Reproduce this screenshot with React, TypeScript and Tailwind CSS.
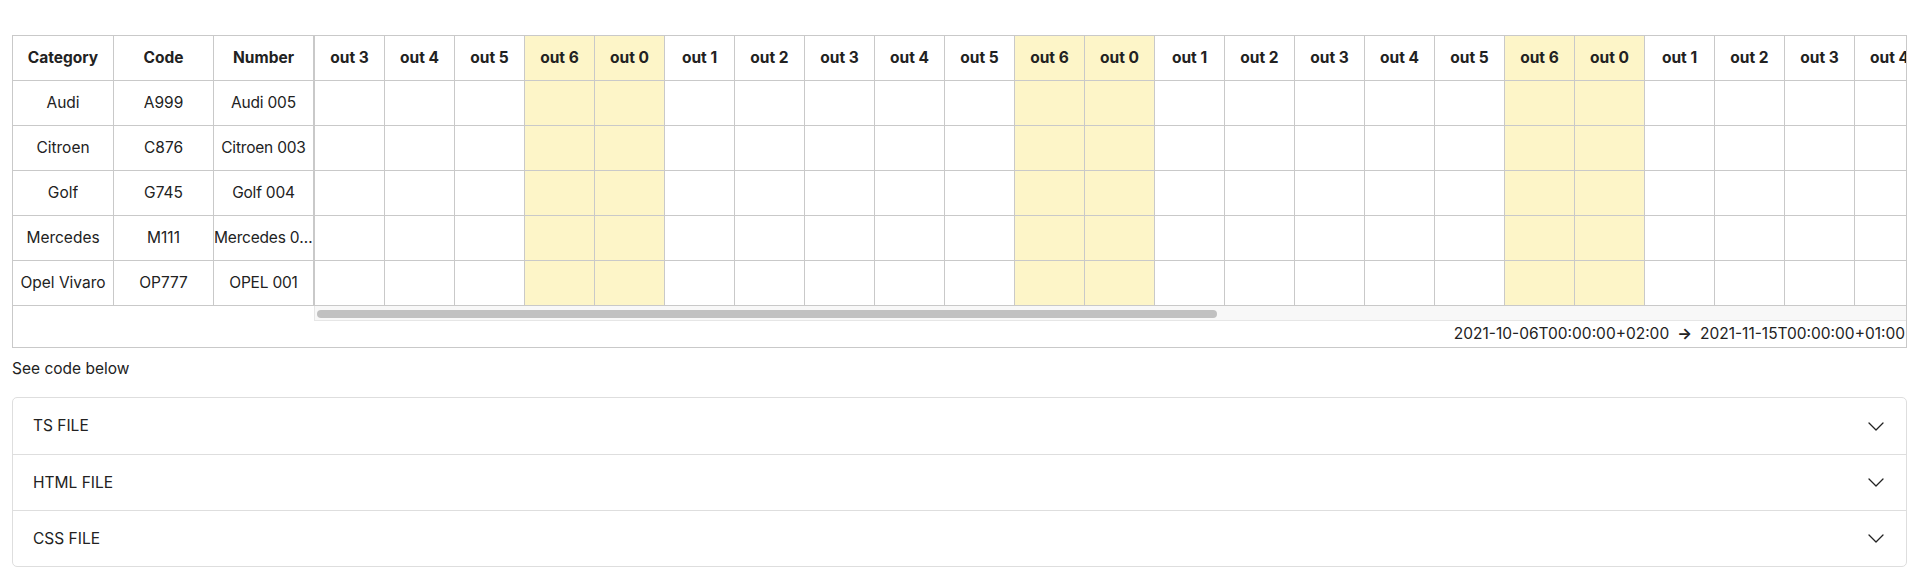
import React from 'react';

type Car = { category: string; code: string; number: string };

const cars: Car[] = [
  { category: 'Audi', code: 'A999', number: 'Audi 005' },
  { category: 'Citroen', code: 'C876', number: 'Citroen 003' },
  { category: 'Golf', code: 'G745', number: 'Golf 004' },
  { category: 'Mercedes', code: 'M111', number: 'Mercedes 005' },
  { category: 'Opel Vivaro', code: 'OP777', number: 'OPEL 001' },
];

const months = ['jan', 'fev', 'mar', 'abr', 'mai', 'jun', 'jul', 'ago', 'set', 'out', 'nov', 'dez'];

// 2021-10-06 -> 2021-11-15, one column per day
const days = Array.from({ length: 41 }, (_, i) => {
  const d = new Date(Date.UTC(2021, 9, 6 + i));
  const dow = d.getUTCDay();
  return { key: i, label: `${months[d.getUTCMonth()]} ${dow}`, weekend: dow === 0 || dow === 6 };
});

const cell = 'h-[45px] border-b border-r border-[#c9c9c9] flex items-center justify-center';

function Chevron() {
  return (
    <svg width="16" height="9" viewBox="0 0 16 9" fill="none" className="shrink-0">
      <path d="M1 1l7 7 7-7" stroke="#222" strokeWidth="1.3" strokeLinecap="round" strokeLinejoin="round" />
    </svg>
  );
}

export default function App() {
  const files = ['TS FILE', 'HTML FILE', 'CSS FILE'];

  return (
    <div className="min-h-screen bg-white px-3 pt-[35px] text-[15.5px] text-[#222] font-['Inter',sans-serif]">
      {/* Planning table */}
      <div className="border border-[#c9c9c9]">
        <div className="flex">
          {/* Frozen columns */}
          <div className="shrink-0">
            <div className="flex font-bold">
              <div className={`${cell} w-[101px]`}>Category</div>
              <div className={`${cell} w-[100px]`}>Code</div>
              <div className={`${cell} w-[101px] border-r-2`}>Number</div>
            </div>
            {cars.map((car) => (
              <div key={car.code} className="flex">
                <div className={`${cell} w-[101px] px-[2px]`}>
                  <span className="truncate">{car.category}</span>
                </div>
                <div className={`${cell} w-[100px] px-[2px]`}>
                  <span className="truncate">{car.code}</span>
                </div>
                <div className={`${cell} w-[101px] border-r-2 justify-start`}>
                  <span className="truncate w-full text-center tracking-[-0.2px]">{car.number}</span>
                </div>
              </div>
            ))}
          </div>

          {/* Day columns */}
          <div className="flex-1 min-w-0 overflow-hidden">
            <div className="w-max">
              <div className="flex font-bold">
                {days.map((d) => (
                  <div key={d.key} className={`${cell} w-[70px] shrink-0 ${d.weekend ? 'bg-[#fdf5c8]' : ''}`}>
                    {d.label}
                  </div>
                ))}
              </div>
              {cars.map((car) => (
                <div key={car.code} className="flex">
                  {days.map((d) => (
                    <div key={d.key} className={`${cell} w-[70px] shrink-0 ${d.weekend ? 'bg-[#fdf5c8]' : ''}`} />
                  ))}
                </div>
              ))}
            </div>
          </div>
        </div>

        {/* Scrollbar */}
        <div className="flex h-[15px]">
          <div className="w-[301px] shrink-0" />
          <div className="flex-1 border-l border-b border-[#e6e6e6] bg-[#f8f8f8] pl-[2px] pt-[4px]">
            <div className="h-2 w-[900px] rounded-full bg-[#c1c1c1]" />
          </div>
        </div>

        {/* Date range */}
        <div className="flex h-[26px] items-center justify-end whitespace-nowrap pr-[1px]">
          <span>2021-10-06T00:00:00+02:00</span>
          <span className="mx-[8px] font-bold">→</span>
          <span>2021-11-15T00:00:00+01:00</span>
        </div>
      </div>

      <p className="mt-[11px] leading-5">See code below</p>

      {/* Code accordion */}
      <div className="mt-[18px] rounded-[5px] border border-[#dedede]">
        {files.map((f, i) => (
          <div
            key={f}
            className={`flex h-[56px] items-center justify-between pl-5 pr-[22px] ${i > 0 ? 'border-t border-[#dedede]' : ''}`}
          >
            <span>{f}</span>
            <Chevron />
          </div>
        ))}
      </div>
    </div>
  );
}
